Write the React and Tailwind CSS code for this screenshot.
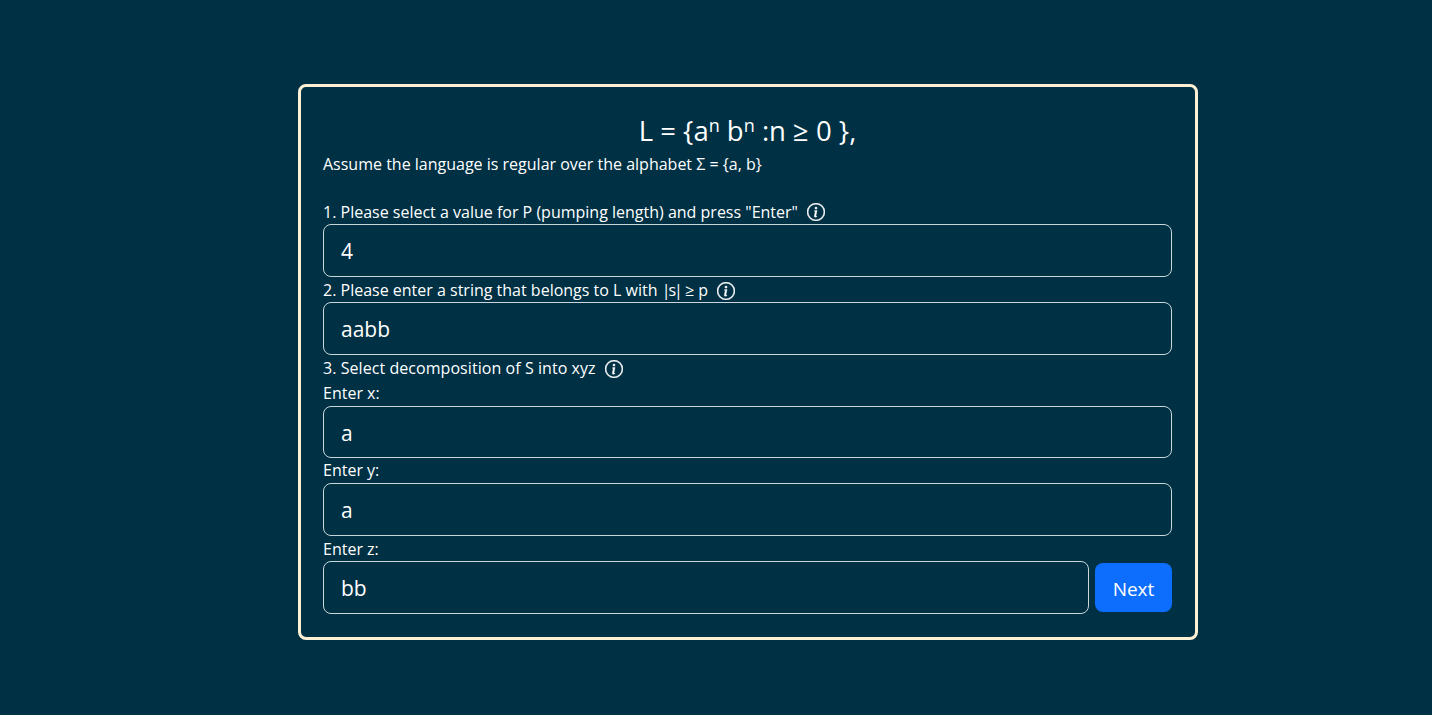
import { useState } from "react";
import { BsInfoCircle } from "react-icons/bs";

const inputClass =
  "block w-full px-[17px] pt-px bg-transparent border border-[#c9d6da] rounded-lg text-[21px] text-white outline-none";

function Label({ children, info, className = "h-[25px]" }) {
  return (
    <div className={`flex items-center text-[16px] leading-[25px] text-white ${className}`}>
      <span>{children}</span>
      {info && (
        <BsInfoCircle stroke="currentColor" strokeWidth={0.4} className="ml-[9px] w-[18px] h-[18px]" />
      )}
    </div>
  );
}

export default function App() {
  const [pumping, setPumping] = useState("4");
  const [str, setStr] = useState("aabb");
  const [x, setX] = useState("a");
  const [y, setY] = useState("a");
  const [z, setZ] = useState("bb");

  return (
    <div className="min-h-screen bg-[#003044] flex justify-center pl-16 pt-[84px] font-['Open_Sans',sans-serif]">
      <div className="w-[900px] h-[556px] border-[3px] border-[#fdf0d5] rounded-lg pl-[22px] pr-[23px] pt-[23px]">
        <h1 className="text-[27.5px] leading-[42px] text-center text-white">
          L = {"{"}a<sup className="text-[18px]">n</sup> b<sup className="text-[18px]">n</sup> :n ≥ 0 {"}"},
        </h1>
        <p className="h-[47px] text-[16px] leading-[24px] text-white">
          Assume the language is regular over the alphabet Σ = {"{"}a, b{"}"}
        </p>

        <Label info className="h-[25px] pt-px">
          1. Please select a value for P (pumping length) and press "Enter"
        </Label>
        <input className={`${inputClass} h-[53px]`} value={pumping} onChange={(e) => setPumping(e.target.value)} />

        <Label info className="h-[25px] pt-[2px]">
          2. Please enter a string that belongs to L with <span className="tracking-[-2px]">|s|</span> ≥ p
        </Label>
        <input className={`${inputClass} h-[53px]`} value={str} onChange={(e) => setStr(e.target.value)} />

        <Label info className="h-[26px] pt-px">
          <span className="tracking-[0.06px]">3. Select decomposition of S into xyz</span>
        </Label>
        <Label>Enter x:</Label>
        <input className={`${inputClass} h-[52px]`} value={x} onChange={(e) => setX(e.target.value)} />

        <Label>Enter y:</Label>
        <input className={`${inputClass} h-[53px]`} value={y} onChange={(e) => setY(e.target.value)} />

        <Label className="h-[25px] pt-px">Enter z:</Label>
        <div className="flex items-center gap-[6px]">
          <input className={`${inputClass} h-[53px]`} value={z} onChange={(e) => setZ(e.target.value)} />
          <button className="shrink-0 w-[77px] h-[49px] pt-[3px] bg-[#0d6efd] rounded-lg text-[19px] text-white">
            Next
          </button>
        </div>
      </div>
    </div>
  );
}
